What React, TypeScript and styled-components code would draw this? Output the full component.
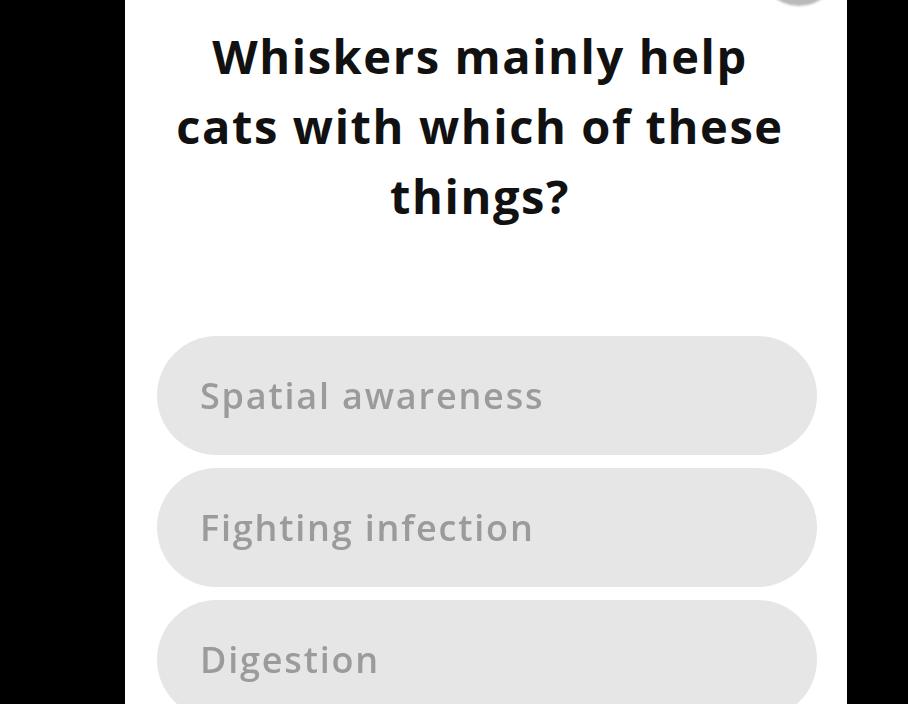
import React from "react";
import styled, { createGlobalStyle } from "styled-components";

const Global = createGlobalStyle`
  html, body { margin: 0; padding: 0; background: #000; }
  body { width: 908px; height: 704px; overflow: hidden; }
`;

const Stage = styled.div`
  display: flex;
  height: 704px;
  background: #000;
  padding-left: 125px;
`;

const Panel = styled.div`
  position: relative;
  width: 722px;
  height: 704px;
  background: #fff;
  overflow: hidden;
  display: flex;
  flex-direction: column;
  font-family: "Open Sans", "Noto Sans", sans-serif;
`;

const CloseBubble = styled.div`
  position: absolute;
  top: -74px;
  left: 634px;
  width: 80px;
  height: 80px;
  border-radius: 50%;
  background: #b9b9b9;
  filter: blur(1px);
`;

const Question = styled.h1`
  margin: 0;
  padding: 21px 40px 0 28px;
  text-align: center;
  font-size: 47px;
  line-height: 70px;
  font-weight: 700;
  color: #111;
  letter-spacing: 1.6px;
`;

const Options = styled.div`
  display: flex;
  flex-direction: column;
  gap: 13px;
  padding: 105px 30px 0 32px;
`;

const Option = styled.div`
  height: 119px;
  border-radius: 60px;
  background: #e6e6e6;
  display: flex;
  align-items: center;
  padding-left: 43px;
  font-size: 36px;
  font-weight: 600;
  letter-spacing: 1.8px;
  color: #9b9b9b;
  filter: blur(0.4px);
`;

const options = ["Spatial awareness", "Fighting infection", "Digestion"];

export default function App() {
  return (
    <>
      <Global />
      <Stage>
        <Panel>
          <CloseBubble />
          <Question>
            Whiskers mainly help
            <br />
            cats with which of these
            <br />
            things?
          </Question>
          <Options>
            {options.map((o) => (
              <Option key={o}>{o}</Option>
            ))}
          </Options>
        </Panel>
      </Stage>
    </>
  );
}
